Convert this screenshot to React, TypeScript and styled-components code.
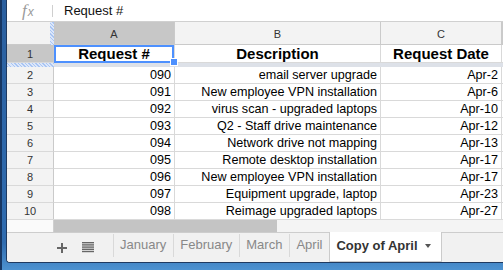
import React from "react";
import styled, { createGlobalStyle } from "styled-components";

const GlobalStyle = createGlobalStyle`
  html, body {
    margin: 0;
    padding: 0;
    width: 503px;
    height: 270px;
    overflow: hidden;
    font-family: "Liberation Sans", Arial, sans-serif;
  }
`;

const COLS = "47px 121px 206px 121px 1fr";

const rows = [
  ["090", "email server upgrade", "Apr-2"],
  ["091", "New employee VPN installation", "Apr-6"],
  ["092", "virus scan - upgraded laptops", "Apr-10"],
  ["093", "Q2 - Staff drive maintenance", "Apr-12"],
  ["094", "Network drive not mapping", "Apr-13"],
  ["095", "Remote desktop installation", "Apr-17"],
  ["096", "New employee VPN installation", "Apr-17"],
  ["097", "Equipment upgrade, laptop", "Apr-23"],
  ["098", "Reimage upgraded laptops", "Apr-27"],
];

const sheets = ["January", "February", "March", "April"];

const Frame = styled.div`
  width: 503px;
  height: 270px;
  box-sizing: border-box;
  padding: 0 0 7px 6px;
  display: flex;
  background: linear-gradient(to bottom, #2a5f9f 0%, #2f6cb0 90%, #4d92d0 100%);
  box-shadow: inset 2px 0 #173763;
`;

const Window = styled.div`
  flex: 1;
  min-width: 0;
  display: flex;
  flex-direction: column;
  background: #fff;
  border-left: 1px solid #1f3a60;
  border-bottom: 1px solid #1f3a60;
  border-bottom-left-radius: 4px;
  overflow: hidden;
`;

const FormulaBar = styled.div`
  height: 22px;
  flex: none;
  box-sizing: border-box;
  display: flex;
  align-items: center;
  border-bottom: 1px solid #d0d0d0;
`;

const Fx = styled.div`
  width: 45px;
  box-sizing: border-box;
  padding-left: 15px;
  color: #9a9a9a;
  display: flex;
  align-items: baseline;
  i {
    font-family: "Liberation Serif", serif;
    font-size: 17px;
    margin-right: 1px;
  }
  span {
    font-size: 12px;
    font-style: italic;
  }
`;

const FormulaDivider = styled.div`
  width: 1px;
  height: 12px;
  background: #cfcfcf;
`;

const FormulaText = styled.div`
  padding-left: 11px;
  font-size: 13px;
  color: #111;
`;

const Sheet = styled.div`
  flex: 1;
  min-height: 0;
  overflow: hidden;
`;

const Row = styled.div<{ $h: number }>`
  display: grid;
  grid-template-columns: ${COLS};
  height: ${(p) => p.$h}px;
`;

const ColHead = styled.div<{ $sel?: boolean; $freeze?: boolean }>`
  position: relative;
  box-sizing: border-box;
  border-right: 1px solid #cacaca;
  border-bottom: 1px solid #cacaca;
  background: ${(p) => (p.$sel ? "#c7c7c7" : "#f3f3f3")};
  color: #333;
  font-size: 11px;
  display: flex;
  align-items: center;
  justify-content: center;
  padding-top: 1px;
  &::after {
    content: "";
    display: ${(p) => (p.$freeze ? "block" : "none")};
    position: absolute;
    top: 0;
    bottom: -1px;
    right: -1px;
    width: 4px;
    background: repeating-linear-gradient(45deg, #a9c5f3 0 1px, #dce7fa 1px 2.5px);
  }
`;

const RowHead = styled.div<{ $sel?: boolean }>`
  box-sizing: border-box;
  border-right: 1px solid #cacaca;
  border-bottom: 1px solid #d9d9d9;
  background: ${(p) => (p.$sel ? "#c7c7c7" : "#f3f3f3")};
  color: #333;
  font-size: 11px;
  display: flex;
  align-items: center;
  justify-content: center;
`;

const Cell = styled.div<{ $bold?: boolean; $sel?: boolean }>`
  position: relative;
  box-sizing: border-box;
  border-right: 1px solid #d9d9d9;
  border-bottom: 1px solid #d9d9d9;
  display: flex;
  align-items: center;
  justify-content: ${(p) => (p.$bold ? "center" : "flex-end")};
  padding: 0 3px;
  white-space: nowrap;
  font-size: ${(p) => (p.$bold ? "15px" : "12.6px")};
  font-weight: ${(p) => (p.$bold ? 700 : 400)};
  color: #000;
  &::after {
    content: "";
    display: ${(p) => (p.$sel ? "block" : "none")};
    position: absolute;
    inset: 0 0 -1px 0;
    border: 2px solid #4d90fe;
  }
  &::before {
    content: "";
    display: ${(p) => (p.$sel ? "block" : "none")};
    position: absolute;
    right: -4px;
    bottom: -4px;
    width: 6px;
    height: 6px;
    background: #4d90fe;
    border: 1px solid #fff;
    z-index: 2;
  }
`;

const FreezeBand = styled.div<{ $hatch?: boolean }>`
  background: ${(p) =>
    p.$hatch
      ? "repeating-linear-gradient(45deg, #a9c5f3 0 1px, #dce7fa 1px 2.5px)"
      : "#dde1e8"};
`;

const ScrollRow = styled.div`
  display: flex;
  height: 12px;
  flex: none;
  background: #f4f4f4;
  border-top: 1px solid #dadada;
`;

const ScrollCorner = styled.div`
  width: 47px;
  box-sizing: border-box;
  background: #fafafa;
  border-right: 1px solid #cfcfcf;
`;

const Thumb = styled.div`
  width: 223px;
  background: #c4c4c4;
`;

const TabBar = styled.div`
  height: 30px;
  flex: none;
  box-sizing: border-box;
  display: flex;
  align-items: stretch;
  background: #f1f1f1;
  border-top: 1px solid #cdcdcd;
  padding-left: 42px;
`;

const IconButton = styled.div`
  width: 26px;
  display: flex;
  align-items: center;
  justify-content: center;
  color: #666;
`;

const Tabs = styled.div`
  display: flex;
  margin-left: 12px;
`;

const Tab = styled.div<{ $active?: boolean }>`
  display: flex;
  align-items: center;
  gap: 7px;
  box-sizing: border-box;
  font-size: 13px;
  white-space: nowrap;
  color: ${(p) => (p.$active ? "#333" : "#888")};
  font-weight: ${(p) => (p.$active ? 700 : 400)};
  background: ${(p) => (p.$active ? "#fff" : "transparent")};
  padding: ${(p) => (p.$active ? "0 10px 2px 6px" : "0 7px 2px 6px")};
  margin: ${(p) => (p.$active ? "-1px 0 0 0" : "1px 0 5px 0")};
  border-left: 1px solid ${(p) => (p.$active ? "#cbcbcb" : "#d9d9d9")};
  border-right: ${(p) => (p.$active ? "1px solid #cbcbcb" : "none")};
  border-bottom: ${(p) => (p.$active ? "1px solid #cbcbcb" : "none")};
`;

const Caret = styled.span`
  width: 0;
  height: 0;
  border-left: 3.5px solid transparent;
  border-right: 3.5px solid transparent;
  border-top: 4px solid #555;
  margin-top: 1px;
`;

const PlusIcon = () => (
  <svg width="10" height="10" viewBox="0 0 10 10">
    <rect x="4" y="0" width="2" height="10" fill="currentColor" />
    <rect x="0" y="4" width="10" height="2" fill="currentColor" />
  </svg>
);

const ListIcon = () => (
  <svg width="12" height="11" viewBox="0 0 12 11">
    {[0, 2.2, 4.4, 6.6, 8.8].map((y) => (
      <rect key={y} x="0" y={y} width="12" height="1.4" fill="currentColor" />
    ))}
  </svg>
);

export default function App() {
  return (
    <Frame>
      <GlobalStyle />
      <Window>
        <FormulaBar>
          <Fx>
            <i>f</i>
            <span>x</span>
          </Fx>
          <FormulaDivider />
          <FormulaText>Request #</FormulaText>
        </FormulaBar>
        <Sheet>
          <Row $h={23}>
            <ColHead $freeze />
            <ColHead $sel>A</ColHead>
            <ColHead>B</ColHead>
            <ColHead>C</ColHead>
            <ColHead />
          </Row>
          <Row $h={18}>
            <RowHead $sel>1</RowHead>
            <Cell $bold $sel>Request #</Cell>
            <Cell $bold>Description</Cell>
            <Cell $bold>Request Date</Cell>
            <Cell />
          </Row>
          <Row $h={4}>
            <FreezeBand $hatch />
            <FreezeBand />
            <FreezeBand />
            <FreezeBand />
            <FreezeBand />
          </Row>
          {rows.concat([["", "", ""]]).map((r, i) => (
            <Row $h={17} key={i}>
              <RowHead>{r[0] ? i + 2 : ""}</RowHead>
              <Cell>{r[0]}</Cell>
              <Cell>{r[1]}</Cell>
              <Cell>{r[2]}</Cell>
              <Cell />
            </Row>
          ))}
        </Sheet>
        <ScrollRow>
          <ScrollCorner />
          <Thumb />
        </ScrollRow>
        <TabBar>
          <IconButton>
            <PlusIcon />
          </IconButton>
          <IconButton>
            <ListIcon />
          </IconButton>
          <Tabs>
            {sheets.map((s) => (
              <Tab key={s}>{s}</Tab>
            ))}
            <Tab $active>
              Copy of April
              <Caret />
            </Tab>
          </Tabs>
        </TabBar>
      </Window>
    </Frame>
  );
}
